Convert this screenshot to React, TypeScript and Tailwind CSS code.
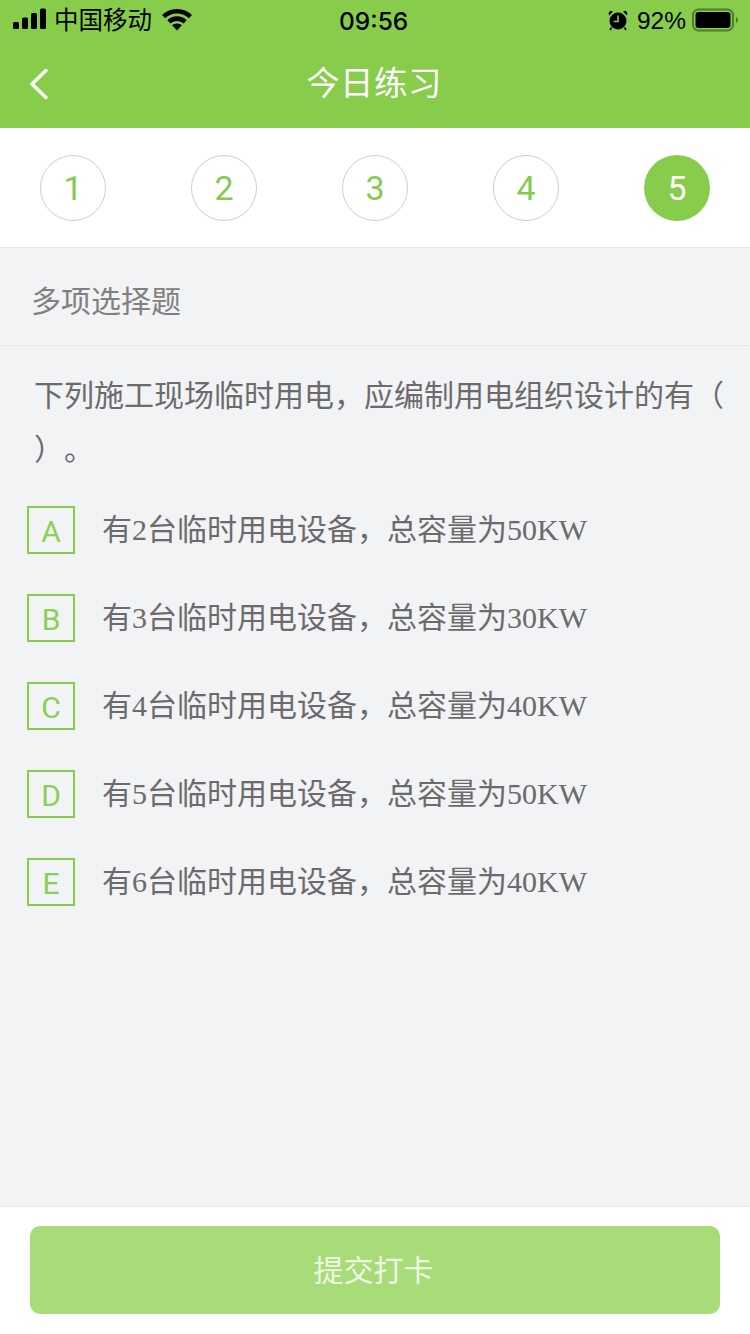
const sans = "font-['Liberation_Sans','Noto_Sans_CJK_SC',sans-serif]";

function StatusBar() {
  return (
    <div className="relative flex h-10 items-center justify-between text-black">
      <div className="flex items-center pl-[13px]">
        <svg width="33" height="22" viewBox="0 0 33 22" fill="currentColor" className="mt-[-2px]">
          <rect x="0" y="14" width="6" height="7" rx="1.500" />
          <rect x="9" y="9.500" width="6" height="11.500" rx="1.500" />
          <rect x="18" y="5" width="6" height="16" rx="1.500" />
          <rect x="27" y="0.500" width="6" height="20.500" rx="1.500" />
        </svg>
        <span className="ml-[8px] mt-[2px] text-[24.500px] leading-none">中国移动</span>
        <svg className="ml-[10px] mt-[-1px]" width="30" height="22" viewBox="0 0 30 22" fill="currentColor">
          <path d="M15 0C9.200 0 4 2.300 0 6l3.200 3.300C6.300 6.400 10.400 4.600 15 4.600s8.700 1.800 11.800 4.700L30 6C26 2.300 20.800 0 15 0z" />
          <path d="M15 7.300c-3.800 0-7.200 1.500-9.700 3.900l3.200 3.300c1.700-1.600 4-2.600 6.500-2.600s4.800 1 6.500 2.600l3.200-3.300C22.200 8.800 18.800 7.300 15 7.300z" />
          <path d="M15 14.400c-1.900 0-3.600.7-4.900 1.900L15 21.500l4.900-5.200c-1.300-1.200-3-1.900-4.900-1.900z" />
        </svg>
      </div>
      <span className="absolute left-[339px] top-[7px] font-['Inter',sans-serif] text-[24.500px] leading-[28px] font-medium">09:56</span>
      <div className="flex items-center pr-[12px]">
        <svg width="22" height="22" viewBox="0 0 22 22" fill="currentColor">
          <circle cx="11" cy="12" r="8.500" />
          <path d="M2 6.500 6 2.500 3.500 1.800 1.600 3.700zM20 6.500 16 2.500l2.500-.7 1.900 1.900z" />
          <path d="M11 6.500v6H6.500" fill="none" stroke="#87cd4b" strokeWidth="1.600" />
          <path d="M4.500 18.500 3 21M17.500 18.500 19 21" stroke="currentColor" strokeWidth="1.500" />
        </svg>
        <span className="ml-[8px] mt-[2px] text-[24.500px] leading-none">92%</span>
        <svg className="ml-[6px]" width="46" height="24" viewBox="0 0 46 24">
          <rect x="1" y="1.500" width="40" height="21" rx="5.500" fill="none" stroke="#4d7c2a" strokeWidth="2" />
          <rect x="3.500" y="4" width="35" height="16" rx="3" fill="#000" />
          <path d="M44 9c1.300.6 2 1.600 2 3s-.7 2.400-2 3z" fill="#4d7c2a" />
        </svg>
      </div>
    </div>
  );
}

function Step({ n, active }: { n: number; active?: boolean }) {
  return (
    <div
      className={
        active
          ? "flex h-[66px] w-[66px] items-center justify-center rounded-full bg-[#87cd4b] pt-[2px] font-['Roboto',sans-serif] text-[34px] text-white"
          : "flex h-[66px] w-[66px] items-center justify-center rounded-full border border-[#cfcfcf] pt-[2px] font-['Roboto',sans-serif] text-[34px] text-[#86cb50]"
      }
    >
      {n}
    </div>
  );
}

function Option({ letter, num, total }: { letter: string; num: number; total: number }) {
  return (
    <div className="flex h-[88px] items-center pl-[27px]">
      <div className="flex h-12 w-12 items-center justify-center border-2 border-[#87cd4b] pt-[2px] font-['Roboto',sans-serif] text-[30px] text-[#8ad054]">
        {letter}
      </div>
      <div className="ml-[27px] font-['Liberation_Serif','Noto_Sans_CJK_SC',serif] text-[30px] leading-none text-[#6b6b6b]">
        有{num}台临时用电设备，总容量为{total}KW
      </div>
    </div>
  );
}

export default function App() {
  return (
    <div className={`flex h-[1334px] w-[750px] flex-col overflow-hidden bg-[#f2f3f5] ${sans}`}>
      <header className="h-32 bg-[#87cd4b]">
        <StatusBar />
        <div className="relative flex h-[88px] items-center justify-center pr-[2px]">
          <svg className="absolute left-[29px] top-[28px]" width="20" height="32" viewBox="0 0 20 32" fill="none" stroke="#fff" strokeWidth="3.500" strokeLinecap="round" strokeLinejoin="round">
            <path d="M17 2.500 3 16l14 13.500" />
          </svg>
          <h1 className="text-[33.500px] leading-none font-normal tracking-[0.4px] text-white">今日练习</h1>
        </div>
      </header>

      <div className="flex h-[120px] items-center justify-between border-b border-[#e8e8e8] bg-white px-10">
        {[1, 2, 3, 4].map((n) => (
          <Step key={n} n={n} />
        ))}
        <Step n={5} active />
      </div>

      <div className="flex h-[98px] items-center border-b border-[#e9eaec] pl-[31px] pt-[10px] text-[30px] text-[#808080]">
        多项选择题
      </div>

      <p className="mt-[23px] pl-[34px] pr-[20px] text-[30px] leading-[54px] text-[#6b6b6b] [text-spacing-trim:space-all]">
        下列施工现场临时用电，应编制用电组织设计的有（ ）。
      </p>

      <div className="mt-[9px] flex flex-col">
        <Option letter="A" num={2} total={50} />
        <Option letter="B" num={3} total={30} />
        <Option letter="C" num={4} total={40} />
        <Option letter="D" num={5} total={50} />
        <Option letter="E" num={6} total={40} />
      </div>

      <footer className="mt-auto flex h-[128px] items-start border-t border-[#e8e8e8] bg-white px-[30px] pt-[19px]">
        <button className="h-[88px] w-full rounded-[10px] bg-[#a8dc78] pr-[3px] text-[30px] text-[#eef8e4]">提交打卡</button>
      </footer>
    </div>
  );
}
